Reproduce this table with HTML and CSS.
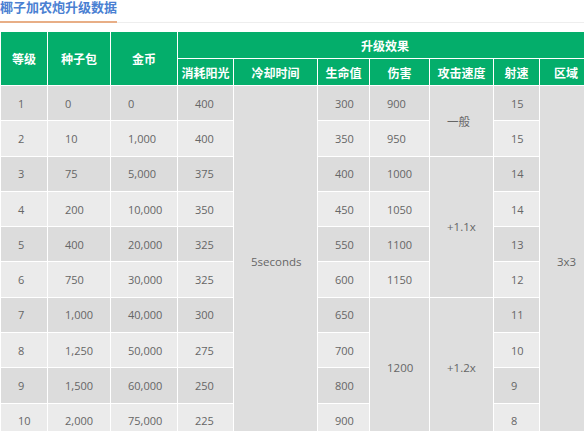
FILE: index.html
```html
<!DOCTYPE html>
<html lang="zh">
<head>
<meta charset="utf-8">
<link rel="stylesheet" href="styles.css">
</head>
<body>
<div class="page">
  <div class="title-bar"><h2 class="title">椰子加农炮升级数据</h2></div>
  <table class="data">
    <colgroup>
      <col style="width:47px"><col style="width:63px"><col style="width:67px"><col style="width:56px"><col style="width:84px"><col style="width:52px"><col style="width:60px"><col style="width:64px"><col style="width:46px"><col style="width:53px">
    </colgroup>
    <thead>
      <tr class="h1">
        <th rowspan="2">等级</th><th rowspan="2">种子包</th><th rowspan="2">金币</th><th colspan="7">升级效果</th>
      </tr>
      <tr class="h2">
        <th>消耗阳光</th><th>冷却时间</th><th>生命值</th><th>伤害</th><th>攻击速度</th><th>射速</th><th>区域</th>
      </tr>
    </thead>
    <tbody>
      <tr class="odd"><td>1</td><td>0</td><td>0</td><td>400</td><td rowspan="10" class="m">5seconds</td><td>300</td><td>900</td><td rowspan="2" class="m">一般</td><td>15</td><td rowspan="10" class="m">3x3</td></tr>
      <tr class="even"><td>2</td><td>10</td><td>1,000</td><td>400</td><td>350</td><td>950</td><td>15</td></tr>
      <tr class="odd"><td>3</td><td>75</td><td>5,000</td><td>375</td><td>400</td><td>1000</td><td rowspan="4" class="m">+1.1x</td><td>14</td></tr>
      <tr class="even"><td>4</td><td>200</td><td>10,000</td><td>350</td><td>450</td><td>1050</td><td>14</td></tr>
      <tr class="odd"><td>5</td><td>400</td><td>20,000</td><td>325</td><td>550</td><td>1100</td><td>13</td></tr>
      <tr class="even"><td>6</td><td>750</td><td>30,000</td><td>325</td><td>600</td><td>1150</td><td>12</td></tr>
      <tr class="odd"><td>7</td><td>1,000</td><td>40,000</td><td>300</td><td>650</td><td rowspan="4" class="m">1200</td><td rowspan="4" class="m">+1.2x</td><td>11</td></tr>
      <tr class="even"><td>8</td><td>1,250</td><td>50,000</td><td>275</td><td>700</td><td>10</td></tr>
      <tr class="odd"><td>9</td><td>1,500</td><td>60,000</td><td>250</td><td>800</td><td>9</td></tr>
      <tr class="even"><td>10</td><td>2,000</td><td>75,000</td><td>225</td><td>900</td><td>8</td></tr>
    </tbody>
  </table>
</div>
</body>
</html>
```
FILE: styles.css
```css
html, body {
  margin: 0;
  padding: 0;
  background: #fff;
}
body {
  font-family: "Open Sans", "Noto Sans CJK SC", sans-serif;
  color: #666;
}
.page {
  width: 592px;
}
.title-bar {
  display: flex;
  border-bottom: 1px solid #eeeeee;
  margin-bottom: 8px;
}
.title {
  white-space: nowrap;
  margin: 0 0 -1px 0;
  padding: 0 0 7px 0;
  font-family: "Noto Sans CJK SC", sans-serif;
  font-size: 13px;
  line-height: 14px;
  font-weight: bold;
  color: #4a80d2;
  border-bottom: 2px solid #e8ae86;
}
.data {
  border-collapse: collapse;
  table-layout: fixed;
  width: 592px;
  font-size: 11px;
}
.data th, .data td {
  border: 1px solid #fff;
  padding: 0;
}
.data th {
  background: #04ae6b;
  color: #fff;
  font-family: "Noto Sans CJK SC", sans-serif;
  font-weight: bold;
  font-size: 12px;
  text-align: center;
}
.data tr.h1 th[colspan] {
  height: 26px;
}
.data tr.h2 th {
  height: 26px;
}
.data td {
  height: 34.3px;
  padding-left: 17px;
  text-align: left;
  vertical-align: middle;
  color: #666;
}
.data tr.odd td {
  background: #dcdcdc;
}
.data tr.even td {
  background: #ebebeb;
}
.data tr td.m {
  background: #dedede;
  font-size: 11.5px;
}
```
